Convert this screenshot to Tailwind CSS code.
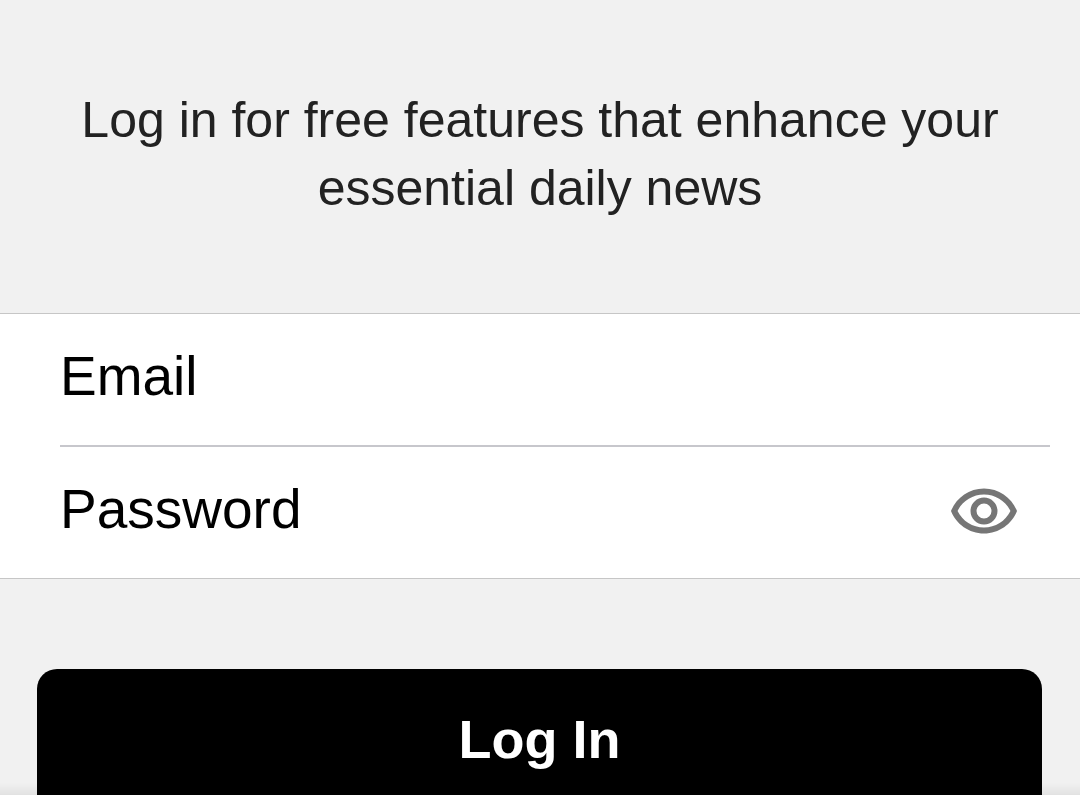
<!DOCTYPE html>
<html lang="en">
<head>
<meta charset="utf-8">
<meta name="viewport" content="width=device-width, initial-scale=1">
<title>Log In</title>
<script src="https://cdn.jsdelivr.net/npm/@tailwindcss/browser@4"></script>
</head>
<body class="overflow-hidden bg-[#f1f1f1] font-['Liberation_Sans',Arial,sans-serif]">
<main>
  <p class="px-16 pt-[86px] pb-[91px] text-center text-[50px] leading-[68px] text-[#222]">Log in for free features that enhance your essential daily news</p>
  <form>
    <div class="border-y border-[#c6c6c6] bg-white pr-[30px] pl-[60px] text-[55px] leading-[64px] text-black">
      <div class="flex h-[133px] items-center border-b-2 border-[#c7c7cc] pb-1">
        <label for="email" class="pb-1">Email</label>
        <input id="email" type="email" class="h-full min-w-0 flex-1 bg-transparent pb-1 pl-4 outline-none">
      </div>
      <div class="flex h-[131px] items-center pt-px pr-[30px] pb-1">
        <label for="password" class="pb-1">Password</label>
        <input id="password" type="password" class="h-full min-w-0 flex-1 bg-transparent pb-1 pl-4 outline-none">
        <button type="button" aria-label="Show password" class="shrink-0">
          <svg class="block size-[72px]" viewBox="0 0 24 24" fill="#767676"><path d="M12 6.500c3.790 0 7.170 2.130 8.820 5.500-1.650 3.370-5.030 5.500-8.820 5.500S4.830 15.370 3.180 12C4.830 8.630 8.210 6.500 12 6.500m0-2C7 4.500 2.730 7.610 1 12c1.730 4.390 6 7.500 11 7.500s9.270-3.110 11-7.500c-1.730-4.390-6-7.500-11-7.500zm0 5a2.500 2.500 0 0 1 0 5 2.500 2.500 0 0 1 0-5m0-2c-2.480 0-4.500 2.020-4.500 4.500s2.020 4.500 4.500 4.500 4.500-2.020 4.500-4.500-2.020-4.500-4.500-4.500z"/></svg>
        </button>
      </div>
    </div>
    <div class="pt-[90px] pr-[38px] pl-[37px]">
      <button type="submit" class="block h-[148px] w-full rounded-[20px] bg-black pb-2 text-[54px] leading-[64px] font-bold text-white">Log In</button>
    </div>
  </form>
</main>
<div class="pointer-events-none fixed inset-x-0 bottom-0 h-3 bg-linear-to-t from-black/6 to-transparent"></div>
</body>
</html>
